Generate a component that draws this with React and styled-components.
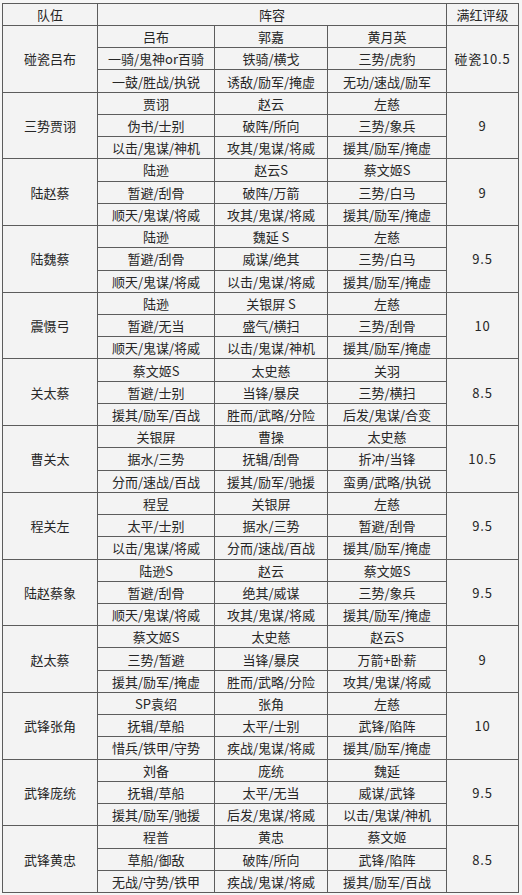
import React from 'react'
import styled, {createGlobalStyle} from 'styled-components'

const teams = [
  {name: '碰瓷吕布', rate: '碰瓷10.5', rows: [
    ['吕布', '郭嘉', '黄月英'],
    ['一骑/鬼神or百骑', '铁骑/横戈', '三势/虎豹'],
    ['一鼓/胜战/执锐', '诱敌/励军/掩虚', '无功/速战/励军'],
  ]},
  {name: '三势贾诩', rate: '9', rows: [
    ['贾诩', '赵云', '左慈'],
    ['伪书/士别', '破阵/所向', '三势/象兵'],
    ['以击/鬼谋/神机', '攻其/鬼谋/将威', '援其/励军/掩虚'],
  ]},
  {name: '陆赵蔡', rate: '9', rows: [
    ['陆逊', '赵云S', '蔡文姬S'],
    ['暂避/刮骨', '破阵/万箭', '三势/白马'],
    ['顺天/鬼谋/将威', '攻其/鬼谋/将威', '援其/励军/掩虚'],
  ]},
  {name: '陆魏蔡', rate: '9.5', rows: [
    ['陆逊', '魏延 S', '左慈'],
    ['暂避/刮骨', '威谋/绝其', '三势/白马'],
    ['顺天/鬼谋/将威', '以击/鬼谋/将威', '援其/励军/掩虚'],
  ]},
  {name: '震慑弓', rate: '10', rows: [
    ['陆逊', '关银屏 S', '左慈'],
    ['暂避/无当', '盛气/横扫', '三势/刮骨'],
    ['顺天/鬼谋/将威', '以击/鬼谋/神机', '援其/励军/掩虚'],
  ]},
  {name: '关太蔡', rate: '8.5', rows: [
    ['蔡文姬S', '太史慈', '关羽'],
    ['暂避/士别', '当锋/暴戾', '三势/横扫'],
    ['援其/励军/百战', '胜而/武略/分险', '后发/鬼谋/合变'],
  ]},
  {name: '曹关太', rate: '10.5', rows: [
    ['关银屏', '曹操', '太史慈'],
    ['据水/三势', '抚辑/刮骨', '折冲/当锋'],
    ['分而/速战/百战', '援其/励军/驰援', '蛮勇/武略/执锐'],
  ]},
  {name: '程关左', rate: '9.5', rows: [
    ['程昱', '关银屏', '左慈'],
    ['太平/士别', '据水/三势', '暂避/刮骨'],
    ['以击/鬼谋/将威', '分而/速战/百战', '援其/励军/掩虚'],
  ]},
  {name: '陆赵蔡象', rate: '9.5', rows: [
    ['陆逊S', '赵云', '蔡文姬S'],
    ['暂避/刮骨', '绝其/威谋', '三势/象兵'],
    ['顺天/鬼谋/将威', '攻其/鬼谋/将威', '援其/励军/掩虚'],
  ]},
  {name: '赵太蔡', rate: '9', rows: [
    ['蔡文姬S', '太史慈', '赵云S'],
    ['三势/暂避', '当锋/暴戾', '万箭+卧薪'],
    ['援其/励军/掩虚', '胜而/武略/分险', '攻其/鬼谋/将威'],
  ]},
  {name: '武锋张角', rate: '10', rows: [
    ['SP袁绍', '张角', '左慈'],
    ['抚辑/草船', '太平/士别', '武锋/陷阵'],
    ['惜兵/铁甲/守势', '疾战/鬼谋/将威', '援其/励军/掩虚'],
  ]},
  {name: '武锋庞统', rate: '9.5', rows: [
    ['刘备', '庞统', '魏延'],
    ['抚辑/草船', '太平/无当', '威谋/武锋'],
    ['援其/励军/驰援', '后发/鬼谋/将威', '以击/鬼谋/神机'],
  ]},
  {name: '武锋黄忠', rate: '8.5', rows: [
    ['程普', '黄忠', '蔡文姬'],
    ['草船/御敌', '破阵/所向', '武锋/陷阵'],
    ['无战/守势/铁甲', '疾战/鬼谋/将威', '援其/励军/百战'],
  ]},
];

function App() {
  return (
    <>
      <GlobalStyle />
      <Page>
        <Table>
          <Cell>队伍</Cell>
          <Cell span={3}>阵容</Cell>
          <Cell>满红评级</Cell>
          {teams.map((team) => (
            <React.Fragment key={team.name}>
              <Cell rows={3}>{team.name}</Cell>
              {team.rows.map((row, i) => (
                <React.Fragment key={i}>
                  {row.map((text, j) => (
                    <Cell key={j}>{text}</Cell>
                  ))}
                  {i === 0 && <Rate rows={3}>{team.rate}</Rate>}
                </React.Fragment>
              ))}
            </React.Fragment>
          ))}
        </Table>
      </Page>
    </>
  );
}

const GlobalStyle = createGlobalStyle`
  html, body {
    margin: 0;
    padding: 0;
    background: #f6f6f6;
  }
`;

const Page = styled.div`
  width: 522px;
  height: 895px;
  padding: 3px 0 0 2px;
  box-sizing: border-box;
  background: #f6f6f6;
  font-family: "Noto Sans CJK SC", "Noto Sans", sans-serif;
`;

const Table = styled.div`
  display: grid;
  width: 517px;
  height: 890px;
  box-sizing: border-box;
  padding: 1px;
  gap: 1px;
  background: #5c5c5c;
  grid-template-columns: 94px 116px 112px 118px 71px;
  grid-template-rows: 21px repeat(39, 1fr);
`;

const Cell = styled.div`
  display: flex;
  align-items: center;
  justify-content: center;
  background: #f3f3f3;
  color: #262626;
  font-size: 13px;
  line-height: 1;
  white-space: nowrap;
  grid-column: span ${(p) => p.span || 1};
  grid-row: span ${(p) => p.rows || 1};
`;

const Rate = styled(Cell)`
  letter-spacing: 0.8px;
`;

export default App;
